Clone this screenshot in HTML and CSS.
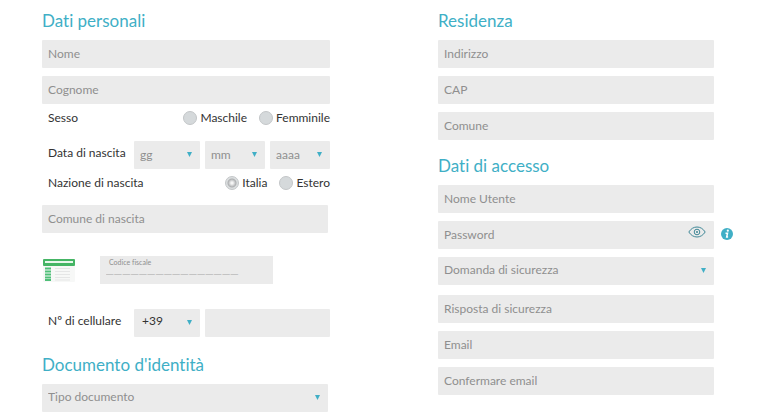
FILE: index.html
```html
<!DOCTYPE html>
<html lang="it">
<head>
<meta charset="utf-8">
<meta name="viewport" content="width=device-width, initial-scale=1">
<title>Registrazione</title>
<link rel="stylesheet" href="styles.css">
</head>
<body>
<form class="form">
  <div class="column">
    <section class="group">
      <h2 class="title">Dati personali</h2>
      <input class="field" type="text" placeholder="Nome" aria-label="Nome">
      <input class="field" type="text" placeholder="Cognome" aria-label="Cognome">
    </section>
    <div class="row choice" role="radiogroup" aria-labelledby="sesso">
      <span class="label" id="sesso">Sesso</span>
      <label class="option"><input class="radio" type="radio" name="sesso">Maschile</label>
      <label class="option"><input class="radio" type="radio" name="sesso">Femminile</label>
    </div>
    <div class="row date">
      <label class="label label-fixed" for="giorno">Data di nascita</label>
      <div class="select prefix"><select class="field" id="giorno"><option>gg</option></select></div>
      <div class="select"><select class="field" aria-label="Mese"><option>mm</option></select></div>
      <div class="select"><select class="field" aria-label="Anno"><option>aaaa</option></select></div>
    </div>
    <div class="row choice" role="radiogroup" aria-labelledby="nazione">
      <span class="label" id="nazione">Nazione di nascita</span>
      <label class="option"><input class="radio" type="radio" name="nazione" checked>Italia</label>
      <label class="option"><input class="radio" type="radio" name="nazione">Estero</label>
    </div>
    <div class="birthplace">
      <input class="field" type="text" placeholder="Comune di nascita" aria-label="Comune di nascita">
    </div>
    <div class="row tax">
      <svg class="card" viewBox="0 0 34 25" aria-hidden="true">
        <rect x="1" y="1" width="32" height="23" rx="1" fill="#f7f8f7"/>
        <rect x="1" y="1" width="32" height="7" rx="1" fill="#45b565"/>
        <rect x="3" y="3" width="28" height="2" fill="#e9f7ec"/>
        <path d="M3 10.500h6M3 13.500h6M3 16.500h6M3 19.500h6M3 22h6" stroke="#4fbf78" stroke-width="2"/>
        <path d="M13 10.500h15M13 13.500h15M13 16.500h15M13 19.500h15M13 22h15" stroke="#e5e6e6"/>
      </svg>
      <div class="code">
        <label class="code-label" for="codice">Codice fiscale</label>
        <input class="code-input" id="codice" type="text" maxlength="16" placeholder="_&#8202;_&#8202;_&#8202;_&#8202;_&#8202;_&#8202;_&#8202;_&#8202;_&#8202;_&#8202;_&#8202;_&#8202;_&#8202;_&#8202;_&#8202;_">
      </div>
    </div>
    <div class="row phone">
      <label class="label label-fixed" for="cellulare">Nº di cellulare</label>
      <div class="select prefix"><select class="field dark" aria-label="Prefisso"><option>+39</option></select></div>
      <input class="field" id="cellulare" type="tel">
    </div>
    <section class="group identity">
      <h2 class="title">Documento d'identità</h2>
      <div class="select"><select class="field" aria-label="Tipo documento"><option>Tipo documento</option></select></div>
    </section>
  </div>

  <div class="column">
    <section class="group">
      <h2 class="title">Residenza</h2>
      <input class="field" type="text" placeholder="Indirizzo" aria-label="Indirizzo">
      <input class="field" type="text" placeholder="CAP" aria-label="CAP">
      <input class="field" type="text" placeholder="Comune" aria-label="Comune">
    </section>
    <section class="group access">
      <h2 class="title">Dati di accesso</h2>
      <input class="field" type="text" placeholder="Nome Utente" aria-label="Nome Utente">
      <div class="password">
        <input class="field" type="password" placeholder="Password" aria-label="Password">
        <button class="icon-button eye" type="button" aria-label="Mostra password">
          <svg width="18" height="12" viewBox="0 0 18 12" fill="none" stroke="#3f8796">
            <path d="M.8 6C3 2.700 5.700 1 9 1s6 1.700 8.200 5C15 9.300 12.300 11 9 11S3 9.300.8 6z"/>
            <circle cx="9" cy="6" r="2.800"/>
            <circle cx="9" cy="6" r="1" fill="#3f8796" stroke="none"/>
          </svg>
        </button>
        <button class="icon-button info" type="button" aria-label="Informazioni">
          <svg width="12" height="12" viewBox="0 0 12 12">
            <circle cx="6" cy="6" r="6" fill="#40afc6"/>
            <circle cx="6.800" cy="2.700" r="1.100" fill="#fff"/>
            <path d="M4.500 5.200h2L5.700 9h1.400" fill="none" stroke="#fff" stroke-width="1.500"/>
          </svg>
        </button>
      </div>
      <div class="select"><select class="field" aria-label="Domanda di sicurezza"><option>Domanda di sicurezza</option></select></div>
    </section>
    <section class="group answers">
      <input class="field" type="text" placeholder="Risposta di sicurezza" aria-label="Risposta di sicurezza">
      <input class="field" type="email" placeholder="Email" aria-label="Email">
      <input class="field" type="email" placeholder="Confermare email" aria-label="Confermare email">
    </section>
  </div>
</form>
</body>
</html>
```
FILE: styles.css
```css
* {
  box-sizing: border-box;
}

body {
  margin: 0;
  background: #fff;
  color: #333;
  font: 12px/16px Lato, "Open Sans", sans-serif;
  font-variant-ligatures: none;
}

input,
select,
button {
  font: inherit;
  font-variant-ligatures: none;
}

.form {
  display: grid;
  grid-template-columns: 288fr 276fr;
  column-gap: 108px;
  padding: 10px 54px 0 42px;
}

.column {
  display: flex;
  flex-direction: column;
  min-width: 0;
}

.group {
  display: flex;
  flex-direction: column;
  gap: 8px;
}

.title {
  margin: 0;
  color: #40afc6;
  font-size: 17px;
  font-weight: 400;
  line-height: 22px;
}

.field {
  display: block;
  width: 100%;
  min-width: 0;
  height: 28px;
  margin: 0;
  padding: 0 6px 2px;
  border: 0;
  border-radius: 1px;
  background: #ebebeb;
  color: #8f8f8f;
}

.field::placeholder {
  color: #8f8f8f;
  opacity: 1;
}

.code-input::placeholder {
  color: #a4a4a4;
  opacity: 1;
}

select.field {
  appearance: none;
}

.select {
  position: relative;
  flex: 1;
  min-width: 0;
}

.select::after {
  content: "";
  position: absolute;
  top: 11px;
  right: 8px;
  width: 5px;
  height: 5px;
  background: #40afc6;
  clip-path: polygon(0 0, 100% 0, 50% 100%);
  pointer-events: none;
}

.row {
  display: flex;
  align-items: center;
}

.label {
  padding-left: 6px;
}

.label-fixed {
  flex: 0 0 92px;
  margin-right: -5px;
  padding-bottom: 5px;
}

.choice {
  height: 28px;
}

.choice .label {
  margin-right: auto;
}

.option {
  display: flex;
  align-items: center;
  gap: 3px;
  margin-left: 12px;
}

.radio {
  appearance: none;
  width: 14px;
  height: 14px;
  margin: 0;
  border: 1px solid #c3c6c8;
  border-radius: 50%;
  background: #d5d9db;
}

.radio:checked {
  background: radial-gradient(circle, #f5f5f5 1px, #adafb1 4px, #dcdfe0 5px);
}

.date {
  gap: 5px;
  margin-top: 9px;
}

.date .field {
  padding-bottom: 0;
}

.prefix {
  flex: 0 0 66px;
}

.birthplace {
  margin-top: 8px;
  padding-right: 2px;
}

.tax {
  gap: 24px;
  margin-top: 23px;
}

.card {
  width: 34px;
  height: 25px;
}

.code {
  flex: 0 1 173px;
  height: 28px;
  padding: 2px 6px;
  background: #ebebeb;
}

.code-label {
  display: block;
  padding-left: 3px;
  color: #8f8f8f;
  font-size: 7px;
  line-height: 8px;
}

.code-input {
  display: block;
  width: 100%;
  height: 16px;
  margin-top: -5px;
  padding: 0;
  border: 0;
  background: none;
  color: #8f8f8f;
  font: bold 13px/16px "Liberation Sans", sans-serif;
}

.phone {
  gap: 5px;
  margin-top: 25px;
}

.phone > .field {
  flex: 1;
}

.dark {
  padding: 0 8px 4px;
  color: #333;
}

.identity {
  margin-top: 17px;
}

.identity .select {
  margin-right: 2px;
}

.access {
  margin-top: 15px;
}

.answers {
  margin-top: 10px;
}

.password {
  position: relative;
}

.icon-button {
  position: absolute;
  display: flex;
  padding: 0;
  border: 0;
  background: none;
}

.eye {
  top: 5px;
  right: 8px;
}

.info {
  top: 7px;
  left: 100%;
  margin-left: 7px;
}
```
